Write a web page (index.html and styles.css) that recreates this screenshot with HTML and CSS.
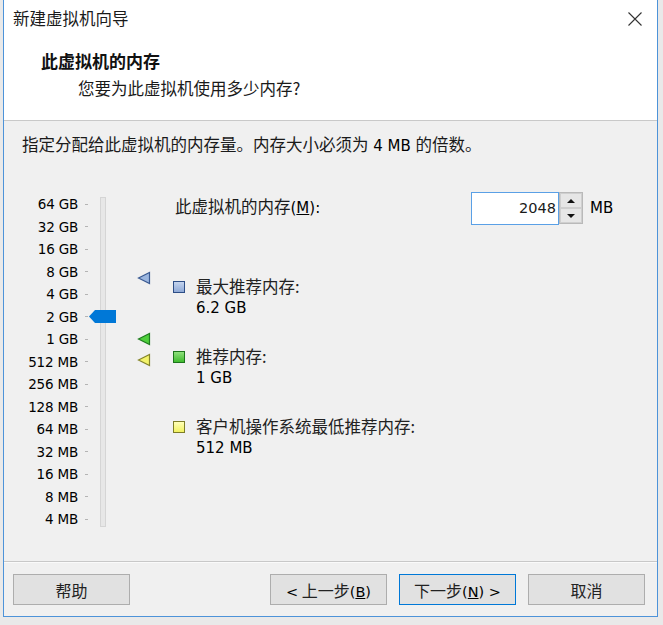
FILE: index.html
```
<!doctype html>
<html lang="zh-CN">
<head>
<meta charset="utf-8">
<title>新建虚拟机向导</title>
<link rel="stylesheet" href="styles.css">
</head>
<body>

<div class="win">

	<div class="titlebar">
		<span class="title">新建虚拟机向导</span>
		<svg class="close" width="14" height="14" viewBox="0 0 14 14">
			<path d="M0.5 0.5 L13.5 13.5 M13.5 0.5 L0.5 13.5" stroke="#333" stroke-width="1.1" fill="none"/>
		</svg>
	</div>

	<div class="head">
		<h1>此虚拟机的内存</h1>
		<p>您要为此虚拟机使用多少内存?</p>
	</div>

	<div class="main">
		<p class="hint">指定分配给此虚拟机的内存量。内存大小必须为<span class="num"> 4 MB </span>的倍数。</p>

		<div class="mem">

			<div class="scale">
				<ul>
					<li>64 GB<i></i></li>
					<li>32 GB<i></i></li>
					<li>16 GB<i></i></li>
					<li>8 GB<i></i></li>
					<li>4 GB<i></i></li>
					<li>2 GB<i></i></li>
					<li>1 GB<i></i></li>
					<li>512 MB<i></i></li>
					<li>256 MB<i></i></li>
					<li>128 MB<i></i></li>
					<li>64 MB<i></i></li>
					<li>32 MB<i></i></li>
					<li>16 MB<i></i></li>
					<li>8 MB<i></i></li>
					<li>4 MB<i></i></li>
				</ul>
				<div class="track"></div>

				<!-- 슬라이더 손잡이 (2 GB) -->
				<svg class="thumb" width="27" height="14" viewBox="0 0 27 14">
					<polygon points="0,6.5 6,0 27,0 27,13 6,13" fill="#0078d7"/>
				</svg>

				<!-- 표시 삼각형: 최대 / 권장 / 최소 -->
				<svg class="mark mark-max" width="14" height="14" viewBox="0 0 14 14">
					<polygon points="1.5,7 12.5,1.5 12.5,12.5" fill="#9bb6df" stroke="#3a5a92" stroke-width="1.2"/>
				</svg>
				<svg class="mark mark-rec" width="14" height="14" viewBox="0 0 14 14">
					<polygon points="1.5,7 12.5,1.5 12.5,12.5" fill="#4fcf3c" stroke="#1e7d1e" stroke-width="1.2"/>
				</svg>
				<svg class="mark mark-min" width="14" height="14" viewBox="0 0 14 14">
					<polygon points="1.5,7 12.5,1.5 12.5,12.5" fill="#f3f36a" stroke="#85852a" stroke-width="1.2"/>
				</svg>
			</div>

			<div class="info">
				<div class="row">
					<label class="mem-label">此虚拟机的内存<span class="num">(<u>M</u>):</span></label>
					<div class="spin">
						<div class="spin-box">2048</div>
						<div class="spin-btns">
							<span class="up"></span>
							<span class="down"></span>
						</div>
					</div>
					<span class="unit">MB</span>
				</div>

				<div class="group">
					<div class="g-label"><span class="sq sq-max"></span>最大推荐内存:</div>
					<div class="g-value">6.2 GB</div>
				</div>
				<div class="group">
					<div class="g-label"><span class="sq sq-rec"></span>推荐内存:</div>
					<div class="g-value">1 GB</div>
				</div>
				<div class="group">
					<div class="g-label"><span class="sq sq-min"></span>客户机操作系统最低推荐内存:</div>
					<div class="g-value">512 MB</div>
				</div>
			</div>

		</div>
	</div>

	<div class="foot">
		<button class="btn">帮助</button>
		<span class="fill"></span>
		<button class="btn"><span class="num">&lt;</span> 上一步<span class="num">(<u>B</u>)</span></button>
		<button class="btn btn-next">下一步<span class="num">(<u>N</u>) &gt;</span></button>
		<button class="btn">取消</button>
	</div>

</div>

</body>
</html>
```

FILE: styles.css
```
body,ul,p,h1 {margin:0;padding:0;}
ul {list-style:none;}

body {
	background:#e9e9e9;
	font-family:"Noto Sans CJK SC", sans-serif;
	font-size:16.5px;
	color:#1a1a1a;
}

.num {
	font-family:"DejaVu Sans", sans-serif;
	font-size:15px;
	color:#000;
}

/* window */

.win {
	margin-left:3px;
	width:653px;
	height:616px;
	border:1px solid #4d93d9;
	border-top:0;
	background:#f0f0f0;
	display:flex;
	flex-direction:column;
}

.titlebar {
	height:37px;
	background:#fff;
	display:flex;
	align-items:center;
	justify-content:space-between;
	padding:0 15px 0 9px;
}

.title { line-height:37px; }

.close { margin-top:1px; }

.head {
	background:#fff;
	padding:12px 0 20px 37px;
	border-bottom:1px solid #c9c9c9;
}

.head h1 {
	font-size:17px;
	font-weight:bold;
	line-height:24px;
	color:#111;
}

.head p {
	margin:3px 0 0 37px;
	line-height:24px;
}

/* main */

.main {
	flex:1;
	border-bottom:1px solid #c8c8c8;
	box-shadow:0 1px 0 #fafafa;
}

.hint {
	padding:11px 0 0 18px;
	line-height:24px;
}

.mem {
	display:flex;
	margin-top:35px;
}

.scale {
	position:relative;
	width:169px;
	display:flex;
	align-items:flex-start;
}

.scale ul {
	width:84px;
	font-family:"DejaVu Sans", sans-serif;
	font-size:13.5px;
	color:#000;
}

.scale li {
	height:22.5px;
	display:flex;
	align-items:center;
	justify-content:flex-end;
	gap:7px;
	letter-spacing:-0.2px;
}

.scale li i {
	display:block;
	width:3px;
	height:1px;
	background:#b4b4b4;
}

.track {
	margin:4px 0 0 12px;
	width:4px;
	height:328px;
	background:#e7e7e7;
	border:1px solid #d5d5d5;
}

.thumb {
	position:absolute;
	left:85px;
	top:117px;
}

.mark {
	position:absolute;
	left:133px;
}

.mark-max { top:78px; }
.mark-rec { top:139px; }
.mark-min { top:160px; }

/* info */

.info { flex:1; }

.row {
	display:flex;
	align-items:center;
	height:32px;
	margin-top:-1px;
}

.mem-label {
	width:296px;
	padding-left:2px;
	line-height:28px;
	margin-top:-3px;
}

.spin { display:flex; }

.spin-box {
	height:31px;
	border:1px solid #5aa0e6;
	background:#fff;
	font-family:"DejaVu Sans", sans-serif;
	font-size:14.5px;
	line-height:30px;
	text-align:right;
	padding-right:2px;
	box-sizing:content-box;
	width:84px;
}

.spin-btns {
	width:24px;
	height:32px;
	border:1px solid #b9b9b9;
	box-sizing:border-box;
	display:flex;
	flex-direction:column;
	background:#e6e6e6;
}

.spin-btns span {
	flex:1;
	position:relative;
	border:1px solid #cfcfcf;
}

.spin-btns .up::after,
.spin-btns .down::after {
	content:"";
	position:absolute;
	left:6px;
	top:5px;
	border-left:4px solid transparent;
	border-right:4px solid transparent;
}

.spin-btns .up::after { border-bottom:4px solid #111; }
.spin-btns .down::after { border-top:4px solid #111; }

.unit {
	margin-left:7px;
	font-family:"DejaVu Sans", sans-serif;
	font-size:15px;
	color:#000;
}

.group { margin-top:27px; }
.group:nth-child(2) { margin-top:52px; }

.g-label,
.g-value {
	line-height:21.5px;
}

.g-label {
	display:flex;
	align-items:center;
	color:#222;
}

.g-value {
	padding-left:23px;
	font-family:"DejaVu Sans", sans-serif;
	font-size:15px;
	color:#000;
}

.sq {
	width:10px;
	height:10px;
	margin-right:11px;
	border:1px solid;
}

.sq-max { background:linear-gradient(#c4d4ee,#8ea9d6); border-color:#2d4e86; }
.sq-rec { background:linear-gradient(#8ee07c,#3fbb2e); border-color:#1c741c; }
.sq-min { background:linear-gradient(#ffffb8,#f1f160); border-color:#7d7d28; }

/* footer */

.foot {
	height:54px;
	display:flex;
	align-items:flex-start;
	gap:12px;
	padding:12px 12px 0 9px;
	box-sizing:border-box;
}

.fill { flex:1; }

.btn {
	width:117px;
	height:31px;
	border:1px solid #adadad;
	background:#e1e1e1;
	font-family:"Noto Sans CJK SC", sans-serif;
	font-size:16px;
	color:#222;
	padding:0;
}

.btn .num { font-size:14.5px; }

.btn-next { border-color:#0078d7; }
```
